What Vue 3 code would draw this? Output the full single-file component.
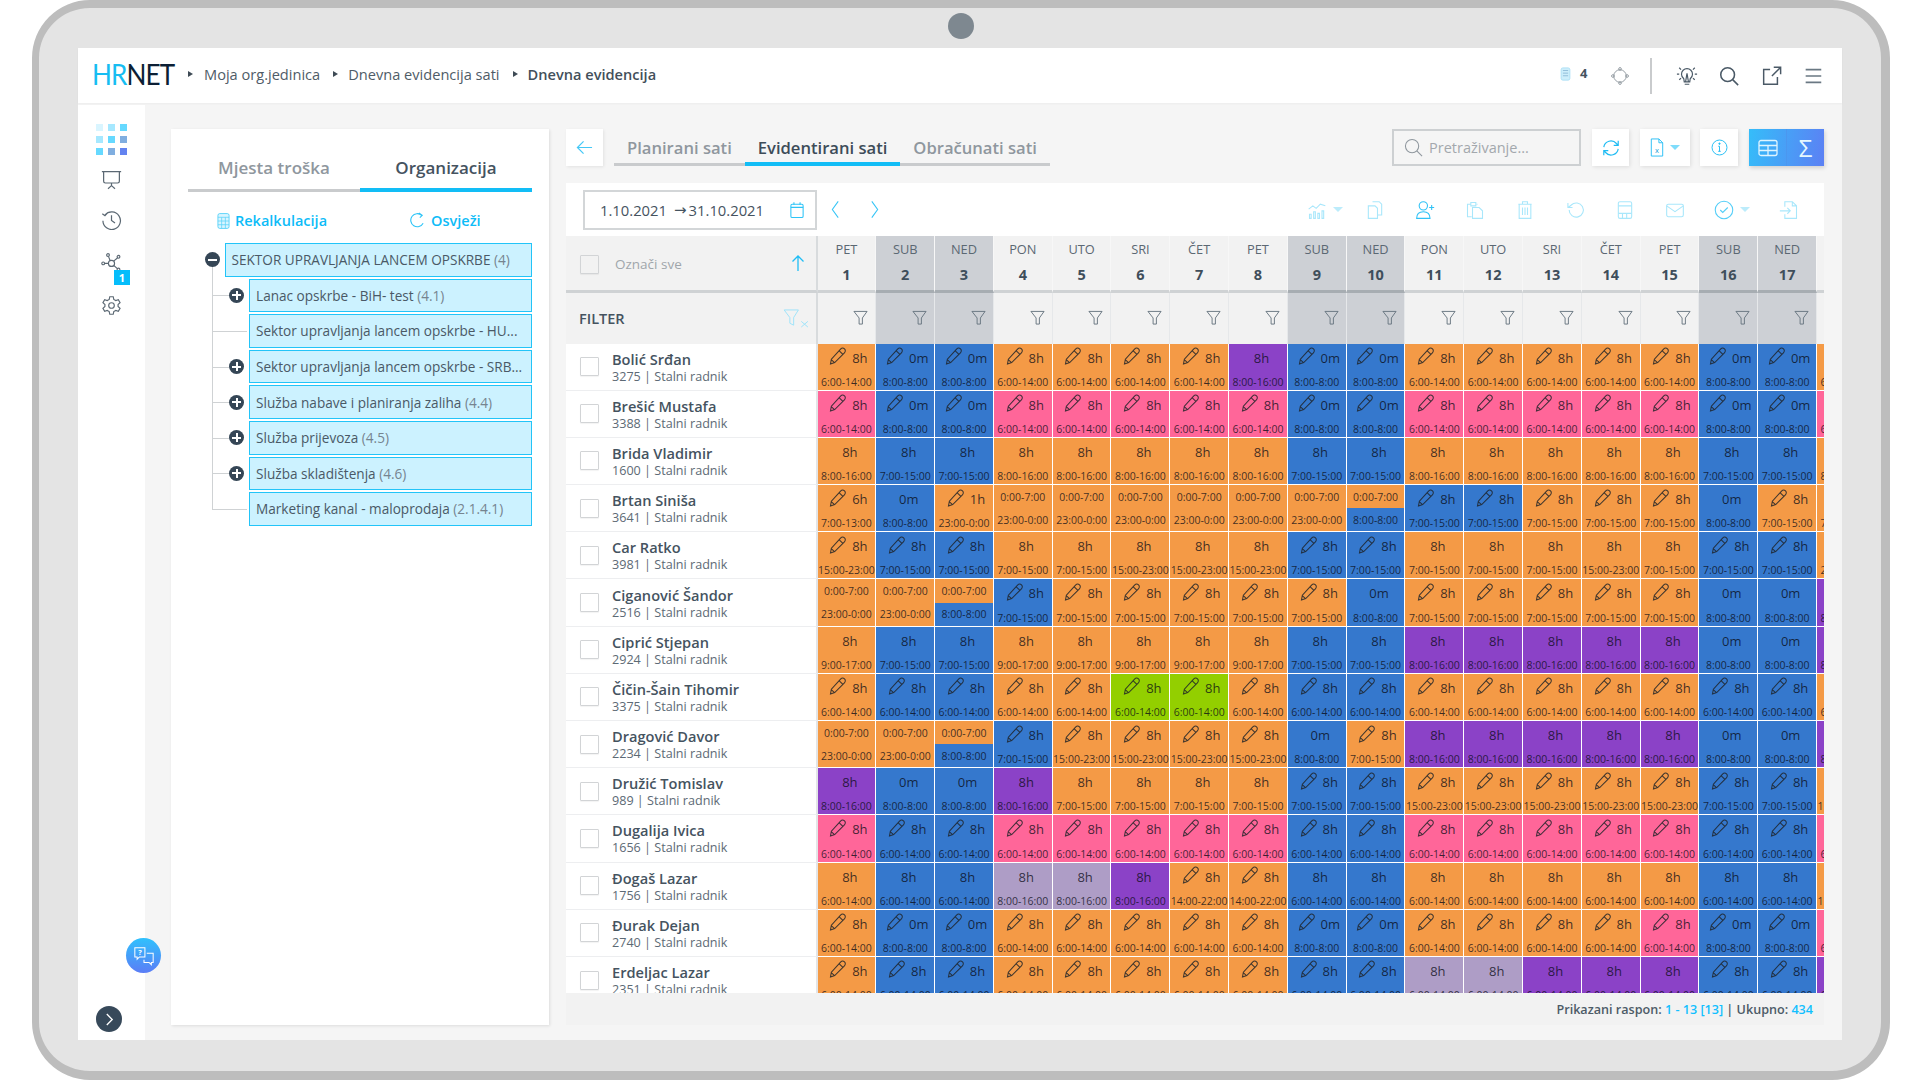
<script setup>
const pencil = 'M4 20.5l1-5.5L15.5 3.5c1.3-1.4 3.2-1.5 4.5-.3s1.2 3.3-.1 4.6L8.8 19zM14 5.5l4.2 4M4.8 15.6l3.8 3.5'
const parse = (t) => {
  const [head, a, b] = t.split(' ')
  if (head === 'S' || head === 'H') return { split: true, half: head === 'H', a, b }
  return { c: head[0], pen: head[1] === '+', val: head.replace(/^.\+?/, ''), time: a }
}
const R = (...g) => g.flatMap(([t, n = 1]) => Array(n).fill(0).map(() => parse(t)))

const oP = 'O+8h 6:00-14:00', bP = 'B+8h 6:00-14:00', b0 = 'B+0m 8:00-8:00', pP = 'P+8h 6:00-14:00'
const bZ = 'B0m 8:00-8:00', vi = 'V8h 8:00-16:00', bS = 'B+8h 7:00-15:00', oS = 'O+8h 7:00-15:00'
const oT = 'O8h 7:00-15:00', bT = 'B8h 7:00-15:00', sp = 'S 0:00-7:00 23:00-0:00', hf = 'H 0:00-7:00 8:00-8:00'
const oN = 'O+8h 15:00-23:00', oL = 'O8h 15:00-23:00', o9 = 'O8h 9:00-17:00', o6 = 'O8h 6:00-14:00', b6 = 'B8h 6:00-14:00', li = 'L8h 8:00-16:00'

const rows = [
  { n: 'Bolić Srđan', s: '3275 | Stalni radnik', d: R([oP], [b0, 2], [oP, 4], [vi], [b0, 2], [oP, 5], [b0, 2], [oP]) },
  { n: 'Brešić Mustafa', s: '3388 | Stalni radnik', d: R([pP], [b0, 2], [pP, 5], [b0, 2], [pP, 5], [b0, 2], [pP]) },
  { n: 'Brida Vladimir', s: '1600 | Stalni radnik', d: R(['O8h 8:00-16:00'], [bT, 2], ['O8h 8:00-16:00', 5], [bT, 2], ['O8h 8:00-16:00', 5], [bT, 2], ['O8h 8:00-16:00']) },
  { n: 'Brtan Siniša', s: '3641 | Stalni radnik', d: R(['O+6h 7:00-13:00'], [bZ], ['O+1h 23:00-0:00'], [sp, 6], [hf], [bS, 2], [oS, 3], [bZ], [oS], [oS]) },
  { n: 'Car Ratko', s: '3981 | Stalni radnik', d: R([oN], [bS, 2], [oT, 2], [oL, 3], [bS, 2], [oT, 3], [oL], [oT], [bS, 2], ['O8h 23:00-0:00']) },
  { n: 'Ciganović Šandor', s: '2516 | Stalni radnik', d: R([sp, 2], [hf], [bS], [oS, 5], [bZ], [oS, 5], [bZ, 2], [vi]) },
  { n: 'Ciprić Stjepan', s: '2924 | Stalni radnik', d: R([o9], [bT, 2], [o9, 5], [bT, 2], [vi, 5], [bZ, 2], [vi]) },
  { n: 'Čičin-Šain Tihomir', s: '3375 | Stalni radnik', d: R([oP], [bP, 2], [oP, 2], ['G+8h 6:00-14:00', 2], [oP], [bP, 2], [oP, 5], [bP, 2], [oP]) },
  { n: 'Dragović Davor', s: '2234 | Stalni radnik', d: R([sp, 2], [hf], [bS], [oN, 4], [bZ], [oS], [vi, 5], [bZ, 2], [vi]) },
  { n: 'Družić Tomislav', s: '989 | Stalni radnik', d: R([vi], [bZ, 2], [vi], [oT, 4], [bS, 2], [oN, 5], [bS, 2], [oN]) },
  { n: 'Dugalija Ivica', s: '1656 | Stalni radnik', d: R([pP], [bP, 2], [pP, 5], [bP, 2], [pP, 5], [bP, 2], [pP]) },
  { n: 'Đogaš Lazar', s: '1756 | Stalni radnik', d: R([o6], [b6, 2], [li, 2], [vi], ['O+8h 14:00-22:00', 2], [b6, 2], [o6, 5], [b6, 2], [oL]) },
  { n: 'Đurak Dejan', s: '2740 | Stalni radnik', d: R([oP], [b0, 2], [oP, 5], [b0, 2], [oP, 4], [pP], [b0, 2], [pP]) },
  { n: 'Erdeljac Lazar', s: '2351 | Stalni radnik', d: R([oP], [bP, 2], [oP, 5], [bP, 2], ['L8h 6:00-14:00', 2], ['V8h 6:00-14:00', 3], [bP, 2], ['V8h 6:00-14:00']) },
]
const names = ['PET', 'SUB', 'NED', 'PON', 'UTO', 'SRI', 'ČET']
const days = Array.from({ length: 17 }, (_, i) => ({ name: names[i % 7], num: i + 1, we: i % 7 === 1 || i % 7 === 2 }))
const tree = [
  { t: 'Lanac opskrbe - BiH- test', k: '(4.1)', plus: true },
  { t: 'Sektor upravljanja lancem opskrbe - HU...', k: '', plus: false },
  { t: 'Sektor upravljanja lancem opskrbe - SRB...', k: '', plus: true },
  { t: 'Služba nabave i planiranja zaliha', k: '(4.4)', plus: true },
  { t: 'Služba prijevoza', k: '(4.5)', plus: true },
  { t: 'Služba skladištenja', k: '(4.6)', plus: true },
  { t: 'Marketing kanal - maloprodaja', k: '(2.1.4.1)', plus: false },
]
const dots = ['#d9f5ff', '#a6e8ff', '#66d9ff', '#a6e8ff', '#66d9ff', '#80aee0', '#66d9ff', '#80aee0', '#6383f0']
</script>

<template>
  <div class="device">
    <span class="camera"></span>
    <div class="screen">
      <header class="topbar">
        <div class="logo"><span class="lg"><span class="hr">HR</span><span class="net">NET</span></span></div>
        <nav class="crumbs">
          <i class="tri"></i><span>Moja org.jedinica</span>
          <i class="tri"></i><span>Dnevna evidencija sati</span>
          <i class="tri"></i><b>Dnevna evidencija</b>
        </nav>
        <div class="top-right">
          <svg class="ic-build" viewBox="0 0 12 16" width="11" height="14"><rect x="1" y="1" width="10" height="14" rx="2" fill="#cdeefb" stroke="#a9dff5"/><path d="M3 4h6M3 7h6M3 10h6" stroke="#8bb9d6" stroke-width="1" /></svg>
          <b class="count">4</b>
          <svg class="ic-diamond" viewBox="0 0 24 24" width="20" height="20" fill="none" stroke="#8d969d" stroke-width="1.1"><circle cx="12" cy="12" r="7.5"/><circle cx="12" cy="3.5" r="1.6"/><circle cx="12" cy="20.5" r="1.6"/><circle cx="3.5" cy="12" r="1.6"/><circle cx="20.5" cy="12" r="1.6"/></svg>
          <span class="vline"></span>
          <svg class="tico" viewBox="0 0 24 24" fill="none" stroke="#4a5966" stroke-width="1.3"><path d="M8.5 15c-1.5-1.3-2.5-3-2.5-5a6 6 0 0 1 12 0c0 2-1 3.700-2.500 5l-.5 3.500h-6zM9.500 21h5M12 9l-1.500 9M12 9l1.500 9M1 10h2.500M20.500 10H23M3.500 3l2 2M20.500 3l-2 2M3.500 16l2-1.500M20.500 16l-2-1.500"/></svg>
          <svg class="tico" viewBox="0 0 24 24" fill="none" stroke="#4a5966" stroke-width="1.7"><circle cx="10.500" cy="10.500" r="7.500"/><path d="M16 16l6 6"/></svg>
          <svg class="tico" viewBox="0 0 24 24" fill="none" stroke="#4a5966" stroke-width="1.600"><path d="M11 5H4v16h15v-8M13 12L22 3M15 2.500h7.500V10"/></svg>
          <svg class="tico" viewBox="0 0 24 24" fill="none" stroke="#6a7883" stroke-width="1.800"><path d="M4 5h17M4 12h17M4 19h17"/></svg>
        </div>
      </header>

      <div class="body">
        <aside class="rail">
          <div class="dots"><i v-for="(c, i) in dots" :key="i" :style="{ background: c }"></i></div>
          <svg class="rico" viewBox="0 0 24 24" fill="none" stroke="#5b6873" stroke-width="1.400"><path d="M1 3h22M3 3v11c0 1 .5 2 2 2h14c1.500 0 2-1 2-2V3M12 16v3M12 19l-4 3.500M12 19l4 3.500"/></svg>
          <svg class="rico" viewBox="0 0 24 24" fill="none" stroke="#5b6873" stroke-width="1.400"><path d="M4.500 7a10 10 0 1 1-2.300 6.500M1.500 5.500l3 2.200 2.500-2.700M12 7v6l4 3"/></svg>
          <div class="net-wrap">
            <svg class="rico" viewBox="0 0 24 24" fill="none" stroke="#5b6873" stroke-width="1.300"><circle cx="12" cy="13" r="3.500"/><circle cx="2.500" cy="13" r="1.600"/><circle cx="8" cy="3.500" r="1.600"/><circle cx="20" cy="5.500" r="1.600"/><circle cx="20" cy="20" r="1.600"/><path d="M4 13h4.500M8.500 5l2 5M18.800 6.800l-4.400 3.700M18.700 19l-4.200-3.800"/></svg>
            <span class="badge">1</span>
          </div>
          <svg class="rico gear" viewBox="0 0 24 24" fill="none" stroke="#5b6873" stroke-width="1.300"><circle cx="12" cy="12" r="3.200"/><path d="M10 2h4l.6 3 2.300 1.300 2.900-1 2 3.500-2.300 2v2.400l2.300 2-2 3.500-2.900-1-2.300 1.300-.6 3h-4l-.6-3-2.300-1.300-2.900 1-2-3.500 2.300-2v-2.400l-2.300-2 2-3.500 2.900 1L9.400 5z"/></svg>
          <span class="help">
            <svg viewBox="0 0 24 24" width="22" height="22" fill="none" stroke="#fff" stroke-width="1.100"><path d="M2 3h11v10H7l-2.500 2.500V13H2zM15 9h7v10h-2v2.500L17.500 19H12v-3"/><text x="7.500" y="11" font-size="8" fill="#fff" stroke="none" text-anchor="middle" font-family="Open Sans" font-weight="700">?</text></svg>
          </span>
          <span class="expand"><svg viewBox="0 0 10 14" width="9" height="13" fill="none" stroke="#fff" stroke-width="1.500"><path d="M2 1l6 6-6 6"/></svg></span>
        </aside>

        <main class="content">
          <section class="panel">
            <div class="ptabs">
              <div class="ptab">Mjesta troška</div>
              <div class="ptab on">Organizacija</div>
            </div>
            <div class="actions">
              <a class="act a1">
                <svg viewBox="0 0 14 18" width="13" height="18" fill="none" stroke="#5ad3fa"><rect x="1" y="1" width="12" height="16" rx="2" fill="#d9f5ff"/><path d="M1 5h12M1 9h12M1 13h12M5 5v12M9 5v12" stroke-width=".8"/></svg>
                Rekalkulacija
              </a>
              <a class="act a2">
                <svg viewBox="0 0 16 18" width="15" height="17" fill="none" stroke="#2dc4f7" stroke-width="1.200"><path d="M12.500 3.500A7 7 0 1 0 14 12M9.500 1l3.500 2.500L10.500 6"/></svg>
                Osvježi
              </a>
            </div>
            <div class="tree">
              <div class="node root">
                <span class="tog"><i class="hbar"></i></span>
                SEKTOR UPRAVLJANJA LANCEM OPSKRBE <em>(4)</em>
              </div>
              <div v-for="n in tree" :key="n.t" class="node child" :class="{ nop: !n.plus }">
                <span v-if="n.plus" class="tog"><i class="hbar"></i><i class="vbar"></i></span>
                {{ n.t }} <em>{{ n.k }}</em>
              </div>
            </div>
          </section>

          <section class="right">
            <div class="toprow">
              <button class="back"><svg viewBox="0 0 18 18" width="17" height="17" fill="none" stroke="#45c8f6" stroke-width="1.300"><path d="M17 9H2M8 2.500L1.500 9 8 15.500"/></svg></button>
              <div class="rtabs">
                <div class="rtab">Planirani sati</div>
                <div class="rtab on">Evidentirani sati</div>
                <div class="rtab">Obračunati sati</div>
              </div>
              <div class="search">
                <svg viewBox="0 0 20 20" width="19" height="19" fill="none" stroke="#8f979e" stroke-width="1.100"><circle cx="8.500" cy="8.500" r="7"/><path d="M13.500 13.500L19 19"/></svg>
                <span>Pretraživanje...</span>
              </div>
              <button class="wbtn w37"><svg viewBox="0 0 20 20" width="18" height="18" fill="none" stroke="#1dbbf3" stroke-width="1.300"><path d="M2 9a8 8 0 0 1 14-4l2 2M18 2v5h-5M18 11a8 8 0 0 1-14 4l-2-2M2 18v-5h5"/></svg></button>
              <button class="wbtn w50">
                <svg viewBox="0 0 14 20" width="14" height="19" fill="none" stroke="#29bff5" stroke-width="1"><path d="M1 1h8l4 4v14H1zM9 1v4h4"/><text x="7" y="16" font-size="8" fill="#1a9fd8" stroke="none" text-anchor="middle" font-family="Open Sans">x</text></svg>
                <i class="caret c1"></i>
              </button>
              <button class="wbtn w38"><svg viewBox="0 0 20 20" width="17" height="17" fill="none" stroke="#1dbbf3" stroke-width="1.100"><circle cx="10" cy="10" r="8.800"/><path d="M10 8.500v6M8.500 8.500H10M8.500 14.500h3" /><circle cx="10" cy="5.500" r=".8" fill="#1dbbf3"/></svg></button>
              <div class="seg">
                <span class="seg1"><svg viewBox="0 0 20 20" width="20" height="20" fill="none" stroke="#dff5ff" stroke-width="1.300"><rect x="1" y="2.500" width="18" height="15" rx="2"/><path d="M1 7.500h18M1 12.500h18M10 7.500v10"/></svg></span>
                <span class="seg2">Σ</span>
              </div>
            </div>

            <div class="card">
              <div class="toolbar">
                <div class="date">
                  <span>1.10.2021</span><span class="arr">→</span><span>31.10.2021</span>
                  <svg viewBox="0 0 16 20" width="14" height="18" fill="none" stroke="#2dc4f7" stroke-width="1.200"><rect x="1" y="3.500" width="14" height="15" rx="1.500"/><path d="M1 7h14M4.500 1v3M11.500 1v3"/></svg>
                </div>
                <svg class="nav" viewBox="0 0 10 20" width="9" height="19" fill="none" stroke="#37c5f6" stroke-width="1.200"><path d="M8 1L1.500 10 8 19"/></svg>
                <svg class="nav n2" viewBox="0 0 10 20" width="9" height="19" fill="none" stroke="#37c5f6" stroke-width="1.200"><path d="M2 1l6.500 9L2 19"/></svg>
                <div class="tools">
                  <span class="tool"><svg viewBox="0 0 24 24" class="ti"><path d="M2 11l5-4 4 3 5-5 6 2M3 22v-5h2v5zM8 22v-8h2v8zM13 22v-6h2v6zM18 22v-9h2v9z"/></svg><i class="caret c2"></i></span>
                  <span class="tool"><svg viewBox="0 0 24 24" class="ti"><path d="M9 2h8l3 3v13h-5M4 7h8l3 3v12H4z" /></svg></span>
                  <span class="tool"><svg viewBox="0 0 24 24" class="ti strong"><circle cx="10" cy="7" r="5"/><path d="M2 22c0-5 3-8 8-8s8 3 8 8zM20 6v6M17 9h6"/></svg></span>
                  <span class="tool"><svg viewBox="0 0 24 24" class="ti"><path d="M7 5H3v15h5M15 5h-1M7 3h6v4H7zM9 9h8l4 4v9H9z"/></svg></span>
                  <span class="tool"><svg viewBox="0 0 24 24" class="ti"><path d="M4 5h16M9 5V2h6v3M5 5v17h14V5M9 9v9M12 9v9M15 9v9"/></svg></span>
                  <span class="tool"><svg viewBox="0 0 24 24" class="ti"><path d="M5 12a8.500 8.500 0 1 0 2.500-6L4 9M3.500 3.500V9H9"/></svg></span>
                  <span class="tool"><svg viewBox="0 0 24 24" class="ti"><rect x="4" y="2" width="16" height="20" rx="2"/><path d="M4 7h16M4 16h16M9 16v6M14 16v6"/></svg></span>
                  <span class="tool"><svg viewBox="0 0 24 24" class="ti"><rect x="2" y="5" width="20" height="15" rx="2"/><path d="M2 7l10 7 10-7"/></svg></span>
                  <span class="tool wide"><svg viewBox="0 0 24 24" class="ti mid"><circle cx="12" cy="12" r="10.500"/><path d="M7.500 12l3 3 6-6"/></svg><i class="caret c2"></i></span>
                  <span class="tool"><svg viewBox="0 0 24 24" class="ti"><path d="M7 8V2h9l5 5v15H7v-5M16 2v5h5M1 13h12M10 9.500l3.500 3.500-3.500 3.500"/></svg></span>
                </div>
              </div>

              <div class="thead">
                <div class="lhead">
                  <span class="cb"></span><span class="all">Označi sve</span>
                  <svg class="up" viewBox="0 0 14 18" width="14" height="18" fill="none" stroke="#1fbdf5" stroke-width="1.300"><path d="M7 17V2M1.500 7.500L7 2l5.500 5.500"/></svg>
                </div>
                <div v-for="d in days" :key="d.num" class="day" :class="{ we: d.we }"><span>{{ d.name }}</span><b>{{ d.num }}</b></div>
                <div class="day"></div>
              </div>
              <div class="tfilter">
                <div class="lfilter">
                  <b>FILTER</b>
                  <svg class="fx" viewBox="0 0 28 20" width="27" height="19" fill="none" stroke="#9ce3fa" stroke-width="1"><path d="M1 1h15l-5 8v8l-4-2V9zM19 13l7 6M26 13l-7 6"/></svg>
                </div>
                <div v-for="d in days" :key="d.num" class="fcell" :class="{ we: d.we }">
                  <svg viewBox="0 0 16 16" width="15" height="15" fill="none" stroke="#66747f" stroke-width="1"><path d="M1 1.500h14l-5 7v6.500H6.500V8.500z"/></svg>
                </div>
                <div class="fcell"></div>
              </div>

              <div class="tbody">
                <div v-for="r in rows" :key="r.n" class="row">
                  <div class="who">
                    <span class="cb"></span>
                    <div class="names"><b>{{ r.n }}</b><span>{{ r.s }}</span></div>
                  </div>
                  <div v-for="(c, i) in r.d" :key="i" class="cell" :class="c.split ? 'cO' : 'c' + c.c">
                    <template v-if="c.split">
                      <div class="halfs">{{ c.a }}</div>
                      <div class="halfs" :class="{ cB: c.half }">{{ c.b }}</div>
                    </template>
                    <template v-else>
                      <div class="val" :class="{ plain: !c.pen }">
                        <svg v-if="c.pen" viewBox="0 0 24 24" width="21" height="21" fill="none" stroke="#1f2328" stroke-opacity=".85" stroke-width="1.200"><path :d="pencil"/></svg>
                        <span>{{ c.val }}</span>
                      </div>
                      <div class="time">{{ c.time }}</div>
                    </template>
                  </div>
                </div>
              </div>

              <footer class="foot">Prikazani raspon:&nbsp;<span>1 - 13 [13]</span>&nbsp;| Ukupno:&nbsp;<span>434</span></footer>
            </div>
          </section>
        </main>
      </div>
    </div>
  </div>
</template>

<style>
html, body { margin: 0; background: #fff; overflow: hidden; }
</style>

<style scoped>
* { box-sizing: border-box; }
.device { position: relative; width: 1858px; height: 1080px; margin-left: 32px; background: #e4e4e4; border: solid #bdbdbd; border-width: 8px 9px 9px 7px; border-radius: 58px; padding: 40px 39px 31px 39px; font-family: "Open Sans", sans-serif; color: #45535f; }
.camera { position: absolute; left: 909px; top: 5px; width: 26px; height: 26px; border-radius: 50%; background: #7e8890; }
.screen { height: 992px; display: flex; flex-direction: column; background: #f5f5f5; }
.topbar { height: 55px; flex: none; background: #fff; display: flex; align-items: center; padding-left: 14px; box-shadow: 0 1px 2px rgba(0,0,0,.04); position: relative; }
.logo { width: 96px; flex: none; margin-top: -4px; font-family: "Lato", sans-serif; font-size: 29px; line-height: 26px; }
.lg { display: inline-block; letter-spacing: -1px; transform: scaleX(.9); transform-origin: left center; white-space: nowrap; }
.hr { color: #16bdf2; font-weight: 400; }
.net { color: #0c1f35; font-weight: 400; }
.crumbs { display: flex; align-items: center; font-size: 14.600px; color: #4f5c67; margin-top: -4px; }
.crumbs span { margin-right: 13px; }
.crumbs b { font-weight: 600; color: #434f5a; }
.tri { width: 0; height: 0; border-left: 5px solid #3e4a55; border-top: 3.500px solid transparent; border-bottom: 3.500px solid transparent; margin-right: 10px; }
.crumbs .tri:first-child { margin-right: 11px; }
.top-right { margin-left: auto; display: flex; align-items: center; height: 100%; }
.ic-build { margin-right: 9px; margin-top: -4px; }
.count { font-size: 13px; font-weight: 700; margin-right: 22px; margin-top: -5px; width: 8px; }
.ic-diamond { margin-right: 20px; }
.vline { width: 2px; height: 36px; background: #c9cbcd; margin-right: 24px; }
.tico { width: 22px; height: 22px; margin-right: 20px; }
.tico:last-child { margin-right: 18px; }

.body { flex: 1; display: flex; min-height: 0; }
.rail { position: relative; flex: none; width: 67px; margin-top: 2px; background: #fff; display: flex; flex-direction: column; align-items: center; padding-top: 19px; }
.dots { display: grid; grid-template-columns: repeat(3, 7px); gap: 5px 5px; width: 31px; margin-bottom: 14px; }
.dots i { height: 7px; display: block; }
.rico { width: 21px; height: 21px; margin-bottom: 19px; }
.net-wrap { position: relative; height: 21px; margin-top: 3px; margin-bottom: 22px; }
.badge { position: absolute; left: 13px; top: 18px; width: 16px; height: 15px; background: #05bdfb; color: #fff; font-size: 11px; font-weight: 700; line-height: 15px; text-align: center; }
.help { position: absolute; left: 48px; top: 833px; width: 35px; height: 35px; border-radius: 50%; background: linear-gradient(#2fc1fd, #5b7df6); display: flex; align-items: center; justify-content: center; }
.expand { position: absolute; left: 18px; top: 901px; width: 26px; height: 26px; border-radius: 50%; background: #37495a; display: flex; align-items: center; justify-content: center; }

.content { flex: 1; min-width: 0; display: flex; padding: 26px 18px 15px 26px; gap: 17px; }
.panel { width: 378px; flex: none; background: #fff; padding: 21px 17px 0; box-shadow: 1px 1px 3px rgba(0,0,0,.1); }
.ptabs { display: flex; height: 42px; }
.ptab { flex: 1; text-align: center; font-size: 17px; font-weight: 600; color: #8f979e; border-bottom: 3px solid #c9cbcd; line-height: 36px; }
.ptab.on { color: #45535f; border-bottom: 4px solid #12bdf6; }
.actions { height: 51px; display: flex; align-items: center; }
.act { display: flex; align-items: center; gap: 5px; font-size: 14.500px; font-weight: 600; color: #0dbcf8; margin-top: 6px; }
.a1 { margin-left: 29px; }
.a2 { margin-left: 83px; gap: 6px; }
.tree { display: flex; flex-direction: column; gap: 2px; }
.node { position: relative; height: 33.600px; background: #ccf2ff; border: 1.500px solid #22c4f8; display: flex; align-items: center; white-space: pre; font-size: 13.600px; color: #4a5966; padding-left: 2.500px; }
.node em { font-style: normal; color: #76848f; }
.root { margin-left: 36.500px; }
.child { margin-left: 61px; }
.child::before { content: ""; position: absolute; left: -38px; top: calc(50% - 36px); height: 36px; width: 20px; border-left: 1px solid #cfd2d4; border-bottom: 1px solid #cfd2d4; }
.child.nop::before { width: 34px; }
.tog { position: absolute; left: -21px; top: 50%; margin-top: -7.500px; width: 15px; height: 15px; border-radius: 50%; background: #354656; z-index: 1; }
.hbar { position: absolute; left: 3px; right: 3px; top: 6.500px; height: 2px; background: #fff; }
.vbar { position: absolute; top: 3px; bottom: 3px; left: 6.500px; width: 2px; background: #fff; }

.right { flex: 1; min-width: 0; display: flex; flex-direction: column; gap: 17px; }
.toprow { height: 37px; display: flex; flex: none; }
button { border: 0; padding: 0; background: #fff; display: flex; align-items: center; justify-content: center; font: inherit; }
.back { width: 37px; box-shadow: 1px 1px 3px rgba(0,0,0,.08); }
.rtabs { display: flex; margin-left: 11px; height: 37px; }
.rtab { padding: 0 13px; font-size: 16.600px; font-weight: 600; color: #8f979e; height: 37px; line-height: 37px; border-bottom: 3px solid #c9cbcd; white-space: nowrap; }
.rtab.on { color: #3d4c59; border-bottom: 4px solid #12bdf6; }
.search { margin-left: auto; width: 189px; border: 2px solid #cdd0d2; display: flex; align-items: center; padding-left: 10px; gap: 6px; font-size: 14.500px; color: #a3a8ad; }
.wbtn { margin-left: 11px; box-shadow: 1px 1px 4px rgba(0,0,0,.1); height: 37px; gap: 6px; }
.w37 { width: 37px; }
.w50 { width: 50px; }
.w38 { width: 38px; margin-left: 10px; }
.caret { display: block; width: 0; height: 0; border-top: 5px solid; border-left: 5px solid transparent; border-right: 5px solid transparent; }
.c1 { color: #7fdcfb; }
.c2 { color: #bcecfb; margin-left: 6px; }
.seg { margin-left: 11px; width: 75px; display: flex; box-shadow: 1px 2px 4px rgba(0,0,0,.15); background: linear-gradient(100deg, #35bdf9, #5c80f4); color: #e6f8ff; }
.seg span { flex: 1; display: flex; align-items: center; justify-content: center; }
.seg1 { border-right: 1px solid #4b97ef; }
.seg2 { font-size: 24px; line-height: 1; font-weight: 400; }

.card { flex: 1; min-height: 0; display: flex; flex-direction: column; background: #f2f2f2; overflow: hidden; }
.toolbar { height: 53px; flex: none; background: #fff; display: flex; align-items: center; padding-left: 17px; padding-right: 10px; }
.date { width: 234px; height: 40px; border: 2px solid #d3d6d8; display: flex; align-items: center; padding-left: 15px; font-size: 14.800px; font-weight: 500; color: #45535f; white-space: nowrap; }
.arr { margin: 0 2px 0 7px; font-weight: 400; font-size: 15px; font-family: "DejaVu Sans", sans-serif; }
.date svg { margin-left: auto; margin-right: 11px; }
.nav { margin-left: 14px; flex: none; }
.n2 { margin-left: 30px; }
.tools { margin-left: auto; display: flex; align-items: center; }
.tool { width: 50px; display: flex; align-items: center; justify-content: center; }
.tool.wide { width: 64px; }
.ti { width: 20px; height: 20px; fill: none; stroke: #a9e7fb; stroke-width: 1.300; }
.ti.strong { stroke: #2fc2f6; }
.ti.mid { stroke: #54cef8; }

.thead { height: 57px; flex: none; display: flex; }
.lhead { width: 251.500px; flex: none; display: flex; align-items: center; padding-left: 14px; padding-top: 2px; border-bottom: 3px solid #cfd2d4; border-right: 2px solid #d8dbdd; position: relative; }
.cb { width: 19px; height: 19px; flex: none; background: #fff; border: 1.500px solid #d2d4d6; border-radius: 1px; box-shadow: 0 1px 1px rgba(0,0,0,.05); }
.lhead .cb { background: #f2f2f2; }
.all { margin-left: 16px; font-size: 13.500px; color: #a0a6ab; }
.up { margin-left: auto; margin-right: 11px; margin-top: -3px; }
.day { flex: 0 0 58.800px; display: flex; flex-direction: column; align-items: center; padding-top: 3px; border-bottom: 3px solid #cfd2d4; border-right: 1px solid #f7f7f7; font-size: 12.800px; color: #5b6873; }
.day span { line-height: 21px; }
.day b { font-size: 14.500px; font-weight: 700; color: #3f4e5b; line-height: 24px; margin-top: 3px; }
.day.we { background: #cdd0d5; border-bottom-color: #a7adb2; }
.tfilter { height: 50.500px; flex: none; display: flex; }
.lfilter { width: 251.500px; flex: none; display: flex; align-items: center; padding-left: 13px; border-right: 2px solid #d8dbdd; font-size: 14.500px; }
.lfilter b { font-weight: 600; color: #45535f; }
.fx { margin-left: auto; margin-right: 6px; }
.fcell { flex: 0 0 58.800px; display: flex; align-items: center; justify-content: flex-end; padding-right: 7px; padding-bottom: 2px; border-right: 1px solid #e6e8ea; }
.fcell.we { background: #cdd0d5; }

.tbody { flex: 1; min-height: 0; overflow: hidden; background: #fff; }
.row { height: 47.200px; display: flex; }
.who { width: 251.500px; flex: none; display: flex; align-items: center; padding-left: 14px; border-bottom: 1px solid #edeef0; border-right: 2px solid #e3e5e7; }
.names { margin-left: 13px; margin-top: 1px; display: flex; flex-direction: column; white-space: nowrap; }
.names b { font-size: 14.600px; line-height: 19px; font-weight: 600; color: #45535f; }
.names span { font-size: 12.600px; line-height: 16px; color: #5d6a75; }
.cell { flex: 0 0 58.800px; min-width: 0; border-right: 1px solid #fff; border-bottom: 1px solid #fff; display: flex; flex-direction: column; color: rgba(10, 12, 22, .78); white-space: nowrap; text-align: center; overflow: hidden; }
.cO { background: #f49a46; }
.cB { background: #3578cd; }
.cP { background: #ff6699; }
.cV { background: #8b42c7; }
.cG { background: #93cf00; }
.cL { background: #ae9dc6; }
.val { height: 28px; display: flex; align-items: center; justify-content: center; gap: 4px; font-size: 13px; padding-left: 2px; }
.val.plain { padding-left: 7px; }
.val svg { flex: none; margin-top: -2px; }
.time { margin-top: auto; font-size: 10.500px; line-height: 16px; margin-left: -4px; margin-right: -4px; }
.halfs { flex: 1; display: flex; align-items: center; justify-content: center; font-size: 10.500px; }
.foot { height: 32px; flex: none; background: #f2f2f2; display: flex; align-items: center; justify-content: flex-end; padding-right: 11px; font-size: 12.600px; font-weight: 600; color: #4d5b67; position: relative; }
.foot span { color: #12c0ff; }
</style>
